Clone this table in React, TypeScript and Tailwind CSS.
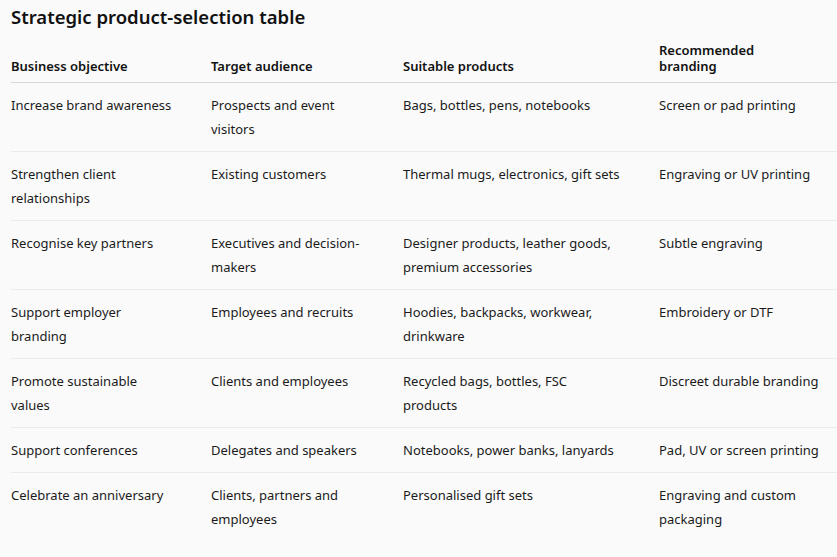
const HEADERS: React.ReactNode[] = [
  "Business objective",
  "Target audience",
  "Suitable products",
  <>
    Recommended
    <br />
    branding
  </>,
];

// explicit breaks keep the wrapping of the reference, whatever font is used
const ROWS: React.ReactNode[][] = [
  [
    "Increase brand awareness",
    <>Prospects and event<br />visitors</>,
    "Bags, bottles, pens, notebooks",
    "Screen or pad printing",
  ],
  [
    <>Strengthen client<br />relationships</>,
    "Existing customers",
    "Thermal mugs, electronics, gift sets",
    "Engraving or UV printing",
  ],
  [
    "Recognise key partners",
    <>Executives and decision-<br />makers</>,
    <>Designer products, leather goods,<br />premium accessories</>,
    "Subtle engraving",
  ],
  [
    <>Support employer<br />branding</>,
    "Employees and recruits",
    <>Hoodies, backpacks, workwear,<br />drinkware</>,
    "Embroidery or DTF",
  ],
  [
    <>Promote sustainable<br />values</>,
    "Clients and employees",
    <>Recycled bags, bottles, FSC<br />products</>,
    "Discreet durable branding",
  ],
  [
    "Support conferences",
    "Delegates and speakers",
    "Notebooks, power banks, lanyards",
    "Pad, UV or screen printing",
  ],
  [
    "Celebrate an anniversary",
    <>Clients, partners and<br />employees</>,
    "Personalised gift sets",
    <>Engraving and custom<br />packaging</>,
  ],
];

const COLS = "grid grid-cols-[200px_192px_256px_1fr]";

export default function App() {
  return (
    <div
      className="min-h-[557px] bg-[#fafafa] pl-[11px] text-[#1a1a1a]"
      style={{ fontFamily: '"Noto Sans", "Open Sans", sans-serif' }}
    >
      <h1 className="pt-[4px] text-[18.5px] font-semibold leading-[26px] text-[#111]">
        Strategic product-selection table
      </h1>

      <div className="mt-[12px]">
        <div className={`${COLS} items-end border-b border-[#d9d9d9] pb-[8px]`}>
          {HEADERS.map((h, i) => (
            <div key={i} className="text-[13px] font-semibold leading-[16px] whitespace-nowrap text-[#111]">
              {h}
            </div>
          ))}
        </div>

        {ROWS.map((row, r) => (
          <div
            key={r}
            className={`${COLS} py-[10px] ${
              r < ROWS.length - 1 ? "border-b border-[#ebebeb]" : ""
            }`}
          >
            {row.map((cell, c) => (
              <div key={c} className="text-[13px] leading-[24px] whitespace-nowrap">
                {cell}
              </div>
            ))}
          </div>
        ))}
      </div>
    </div>
  );
}
